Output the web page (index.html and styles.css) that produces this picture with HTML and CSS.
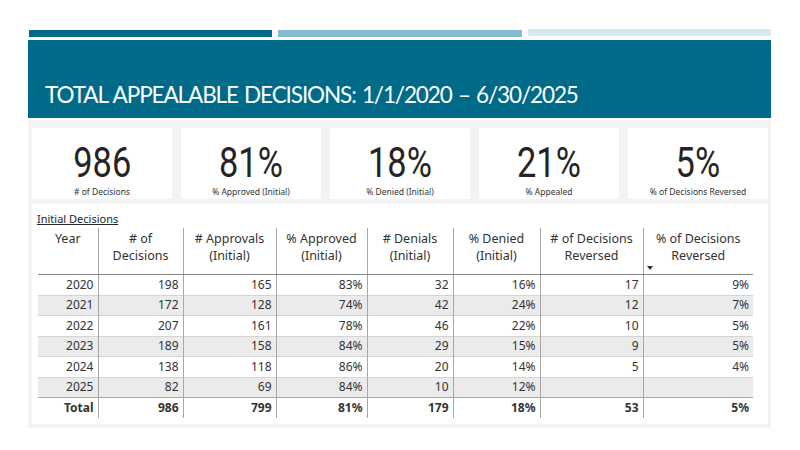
FILE: index.html
```html
<!DOCTYPE html>
<html lang="en">
<head>
<meta charset="utf-8">
<title>Total Appealable Decisions</title>
<link rel="stylesheet" href="styles.css">
</head>
<body>
<div class="slide">
  <div class="bars">
    <div class="bar bar-dark"></div>
    <div class="bar bar-mid"></div>
    <div class="bar bar-light"></div>
  </div>
  <div class="banner">
    <h1 class="title">TOTAL APPEALABLE DECISIONS: 1/1/2020 – 6/30/2025</h1>
  </div>
  <div class="report">
    <div class="cards">
      <div class="card"><div class="kpi"><span class="kpi-num">986</span></div><div class="kpi-label"># of Decisions</div></div>
      <div class="card"><div class="kpi"><span class="kpi-num">81%</span></div><div class="kpi-label">% Approved (Initial)</div></div>
      <div class="card"><div class="kpi"><span class="kpi-num">18%</span></div><div class="kpi-label">% Denied (Initial)</div></div>
      <div class="card"><div class="kpi"><span class="kpi-num">21%</span></div><div class="kpi-label">% Appealed</div></div>
      <div class="card"><div class="kpi"><span class="kpi-num">5%</span></div><div class="kpi-label">% of Decisions Reversed</div></div>
    </div>
    <div class="panel">
      <div class="caption">Initial Decisions</div>
      <table class="grid">
        <colgroup>
          <col class="c-year"><col class="c-dec"><col class="c-appr"><col class="c-pappr">
          <col class="c-den"><col class="c-pden"><col class="c-rev"><col class="c-prev">
        </colgroup>
        <thead>
          <tr>
            <th>Year</th>
            <th># of<br>Decisions</th>
            <th># Approvals<br>(Initial)</th>
            <th>% Approved<br>(Initial)</th>
            <th># Denials<br>(Initial)</th>
            <th>% Denied<br>(Initial)</th>
            <th># of Decisions<br>Reversed</th>
            <th class="sorted">% of Decisions<br>Reversed<span class="sort-arrow"></span></th>
          </tr>
        </thead>
        <tbody>
          <tr><td>2020</td><td>198</td><td>165</td><td>83%</td><td>32</td><td>16%</td><td>17</td><td>9%</td></tr>
          <tr class="alt"><td>2021</td><td>172</td><td>128</td><td>74%</td><td>42</td><td>24%</td><td>12</td><td>7%</td></tr>
          <tr><td>2022</td><td>207</td><td>161</td><td>78%</td><td>46</td><td>22%</td><td>10</td><td>5%</td></tr>
          <tr class="alt"><td>2023</td><td>189</td><td>158</td><td>84%</td><td>29</td><td>15%</td><td>9</td><td>5%</td></tr>
          <tr><td>2024</td><td>138</td><td>118</td><td>86%</td><td>20</td><td>14%</td><td>5</td><td>4%</td></tr>
          <tr class="alt"><td>2025</td><td>82</td><td>69</td><td>84%</td><td>10</td><td>12%</td><td></td><td></td></tr>
          <tr class="total"><td>Total</td><td>986</td><td>799</td><td>81%</td><td>179</td><td>18%</td><td>53</td><td>5%</td></tr>
        </tbody>
      </table>
    </div>
  </div>
</div>
</body>
</html>
```
FILE: styles.css
```css
html, body {
  margin: 0;
  padding: 0;
  background: #ffffff;
}
body {
  font-family: "Noto Sans", "Open Sans", sans-serif;
  color: #333333;
}
.slide {
  width: 743px;
  padding: 29px 0 0 28px;
}
.bars {
  display: flex;
  gap: 6px;
  height: 8px;
  margin-left: 1px;
  align-items: flex-start;
}
.bar {
  height: 7px;
}
.bar-dark {
  width: 243px;
  margin-top: 1px;
  background: #006b88;
}
.bar-mid {
  width: 244px;
  margin-top: 1px;
  background: #85bbd3;
}
.bar-light {
  width: 243px;
  background: #d6e9f1;
}
.banner {
  margin-top: 3px;
  height: 78px;
  background: #006b88;
  display: flex;
  align-items: flex-end;
  padding-left: 17px;
  box-sizing: border-box;
}
.title {
  margin: 0 0 9px 0;
  font-family: "Lato", "Liberation Sans", sans-serif;
  font-weight: 400;
  font-size: 22.5px;
  line-height: 28px;
  letter-spacing: -1.1px;
  word-spacing: 1.5px;
  color: #ffffff;
  white-space: nowrap;
}
.report {
  margin-top: 2px;
  background: #f3f3f3;
  padding: 8px 3px 4px 4px;
}
.cards {
  display: flex;
  gap: 9px;
}
.card {
  width: 140px;
  height: 71px;
  background: #ffffff;
  display: flex;
  flex-direction: column;
  align-items: center;
}
.kpi {
  height: 56px;
  display: flex;
  align-items: flex-end;
  justify-content: center;
}
.kpi-num {
  display: inline-block;
  font-family: "Roboto", "Liberation Sans", sans-serif;
  font-size: 43px;
  line-height: 44px;
  color: #252423;
  transform: scaleX(0.8);
}
.kpi-label {
  margin-top: 2px;
  font-size: 8.5px;
  line-height: 11px;
  color: #333333;
}
.panel {
  margin-top: 5px;
  height: 220px;
  background: #ffffff;
  padding: 8px 0 0 5px;
  box-sizing: border-box;
}
.caption {
  font-size: 11px;
  line-height: 14px;
  color: #252423;
  text-decoration: underline;
}
.grid {
  margin: 2px 0 0 1px;
  border-collapse: collapse;
  table-layout: fixed;
  width: 715px;
  font-size: 12px;
  color: #333333;
}
.c-year { width: 60px; }
.c-dec { width: 85px; }
.c-appr { width: 93px; }
.c-pappr { width: 91px; }
.c-den { width: 86px; }
.c-pden { width: 87px; }
.c-rev { width: 103px; }
.c-prev { width: 110px; }
.grid th {
  font-weight: 400;
  font-size: 12.5px;
  line-height: 17px;
  vertical-align: top;
  text-align: center;
  padding: 2px 2px 0;
  height: 44px;
  border-right: 1px solid #a8a8a8;
  border-bottom: 1px solid #8a8a8a;
  color: #333333;
}
.grid th:last-child,
.grid td:last-child {
  border-right: none;
}
.grid th.sorted {
  position: relative;
}
.sort-arrow {
  position: absolute;
  left: 3px;
  bottom: 4px;
  width: 0;
  height: 0;
  border-left: 3.5px solid transparent;
  border-right: 3.5px solid transparent;
  border-top: 4px solid #333333;
}
.grid td {
  height: 19.5px;
  padding: 0 4px;
  text-align: right;
  line-height: 16px;
  border-right: 1px solid #a8a8a8;
  border-top: 1px solid #d4d4d4;
  white-space: nowrap;
}
.grid tr.alt td {
  background: #ebebeb;
}
.grid tr.total td {
  font-weight: 700;
  border-top: 1px solid #a8a8a8;
}
```
